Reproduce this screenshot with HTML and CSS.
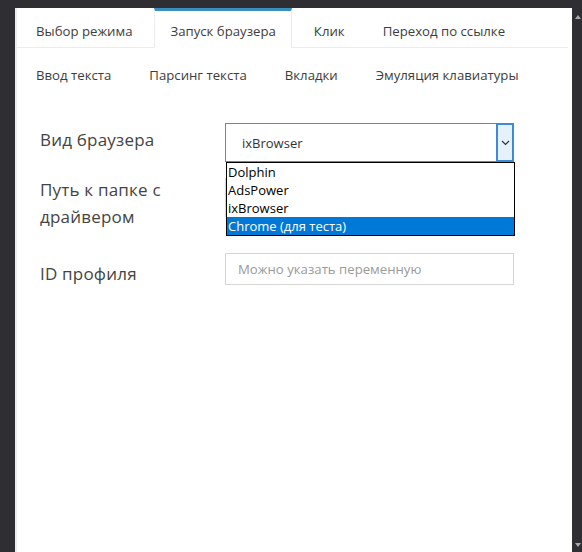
FILE: index.html
```html
<!DOCTYPE html>
<html lang="ru">
<head>
<meta charset="utf-8">
<title>Запуск браузера</title>
<link rel="stylesheet" href="styles.css">
</head>
<body>
<div class="screen">
  <div class="topbar"></div>
  <div class="main">
    <div class="gutter"></div>
    <div class="panel">
      <nav class="tabs tabs-primary">
        <div class="tab">Выбор режима</div>
        <div class="tab active">Запуск браузера</div>
        <div class="tab">Клик</div>
        <div class="tab">Переход по ссылке</div>
      </nav>
      <nav class="tabs tabs-secondary">
        <div class="tab">Ввод текста</div>
        <div class="tab">Парсинг текста</div>
        <div class="tab">Вкладки</div>
        <div class="tab">Эмуляция клавиатуры</div>
      </nav>
      <form class="form">
        <div class="row row-browser">
          <label class="label">Вид браузера</label>
          <div class="field select-wrap">
            <div class="select">
              <span class="select-value">ixBrowser</span>
              <span class="select-btn">
                <svg width="9" height="6" viewBox="0 0 9 6"><polyline points="1,1 4.5,4.5 8,1" fill="none" stroke="#333" stroke-width="1.2"/></svg>
              </span>
            </div>
            <ul class="dropdown">
              <li class="option">Dolphin</li>
              <li class="option">AdsPower</li>
              <li class="option">ixBrowser</li>
              <li class="option selected">Chrome (для теста)</li>
            </ul>
          </div>
        </div>
        <div class="row row-path">
          <label class="label">Путь к папке с<br>драйвером</label>
          <div class="field"><div class="input input-tall"></div></div>
        </div>
        <div class="row row-id">
          <label class="label">ID профиля</label>
          <div class="field"><div class="input placeholder">Можно указать переменную</div></div>
        </div>
      </form>
    </div>
    <div class="scrollbar">
      <span class="arrow arrow-up"></span>
      <span class="arrow arrow-down"></span>
    </div>
  </div>
</div>
</body>
</html>
```
FILE: styles.css
```css
* { box-sizing: border-box; }
html, body { margin: 0; padding: 0; }
body {
  background: #2f2e33;
  font-family: "Open Sans", "Noto Sans", sans-serif;
  color: #3d3d3d;
  width: 582px;
  height: 552px;
  overflow: hidden;
}
.screen { display: flex; flex-direction: column; height: 552px; }
.topbar { height: 8px; flex: none; }
.main { display: flex; flex: 1; }
.gutter { width: 15px; flex: none; }
.panel {
  flex: 1;
  background: #fff;
  border-left: 2px solid #ececf3;
}
.scrollbar {
  width: 10px;
  flex: none;
  display: flex;
  flex-direction: column;
  justify-content: space-between;
  align-items: center;
  padding: 7px 0 5px 1px;
}
.arrow { width: 0; height: 0; border-left: 3px solid transparent; border-right: 3px solid transparent; }
.arrow-up { border-bottom: 4px solid #a9a9ad; }
.arrow-down { border-top: 4px solid #a9a9ad; }

.tabs { display: flex; gap: 6px; padding-left: 3px; font-size: 13.2px; }
.tab {
  padding: 5px 15px 0;
  line-height: 31px;
  border: 1px solid transparent;
  border-top-width: 3px;
  border-bottom: 0;
  white-space: nowrap;
}
.tabs-primary {
  border-bottom: 1px solid #ececec;
  margin-right: 4px;
}
.tab.active {
  border-color: #3a8fc0 #ececec #fff;
  border-bottom: 1px solid #fff;
  margin-bottom: -1px;
  background: #fff;
}
.tabs-secondary { margin-top: 8px; }
.tabs-secondary .tab { border-top-width: 0; padding-top: 0; line-height: 39px; }

.form { padding: 28px 0 0 23px; }
.row { display: flex; align-items: flex-start; }
.label {
  width: 185px;
  flex: none;
  font-size: 17px;
  letter-spacing: 0.2px;
  line-height: 27px;
  color: #444;
}
.field { width: 289px; position: relative; }
.row-browser .label { padding-top: 3px; }
.row-path { margin-top: 14px; }
.row-id { margin-top: 23px; }
.row-id .label { padding-top: 7px; }

.select {
  height: 39px;
  border: 1px solid #4a8fcb;
  display: flex;
  align-items: center;
  justify-content: space-between;
  font-size: 13px;
  color: #333;
}
.select-value { padding-left: 16px; }
.select-btn {
  width: 18px;
  height: 39px;
  margin: -1px -1px -1px 0;
  background: #e5f1fb;
  border: 2px solid #3f8ad4;
  display: flex;
  align-items: center;
  justify-content: center;
}
.dropdown {
  position: absolute;
  top: 39px;
  left: 1px;
  width: 289px;
  margin: 0;
  padding: 0;
  list-style: none;
  background: #fff;
  border: 1px solid #000;
  font-size: 13px;
  color: #000;
  z-index: 2;
}
.option { height: 18px; line-height: 18px; padding-left: 1px; }
.option.selected { background: #0078d7; color: #fff; }

.input {
  height: 32px;
  border: 1px solid #d5d5d5;
  font-size: 13.2px;
  line-height: 30px;
  padding-left: 12px;
}
.input-tall { height: 39px; margin-top: 2px; }
.placeholder { color: #9a9a9a; }
```
